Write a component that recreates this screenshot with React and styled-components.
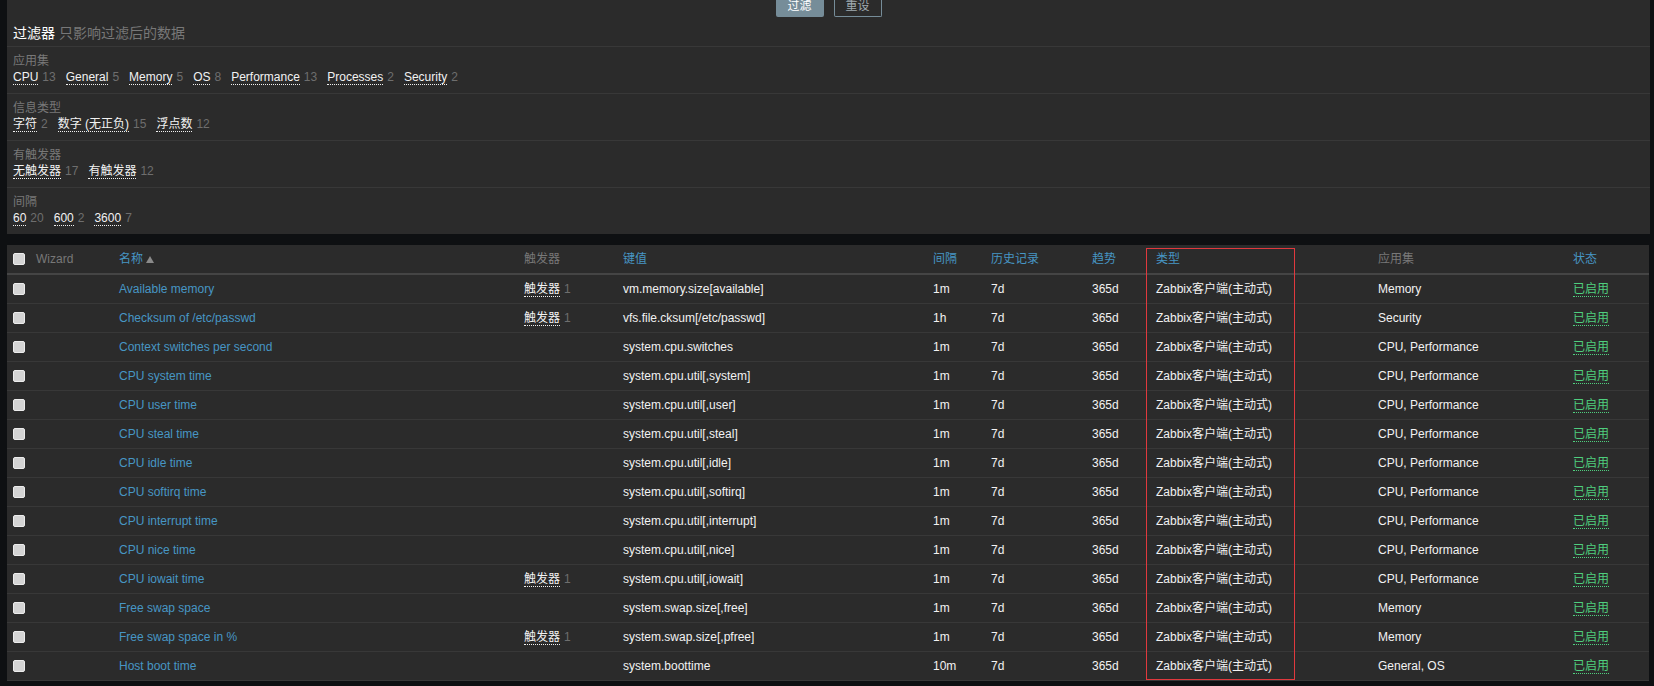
import React from "react";
import styled, { createGlobalStyle } from "styled-components";

const GlobalStyle = createGlobalStyle`
  html, body {
    margin: 0;
    padding: 0;
    background: #0e1012;
  }
  body {
    font-family: "Liberation Sans", Arial, "Noto Sans CJK SC", sans-serif;
    font-size: 12px;
    line-height: 16px;
    color: #f2f2f2;
  }
`;

const filterGroups = [
  {
    label: "应用集",
    items: [
      ["CPU", 13],
      ["General", 5],
      ["Memory", 5],
      ["OS", 8],
      ["Performance", 13],
      ["Processes", 2],
      ["Security", 2],
    ],
  },
  {
    label: "信息类型",
    items: [
      ["字符", 2],
      ["数字 (无正负)", 15],
      ["浮点数", 12],
    ],
  },
  {
    label: "有触发器",
    items: [
      ["无触发器", 17],
      ["有触发器", 12],
    ],
  },
  {
    label: "间隔",
    items: [
      ["60", 20],
      ["600", 2],
      ["3600", 7],
    ],
  },
];

const CPU_PERF = "CPU, Performance";

const items = [
  ["Available memory", true, "vm.memory.size[available]", "1m", "Memory"],
  ["Checksum of /etc/passwd", true, "vfs.file.cksum[/etc/passwd]", "1h", "Security"],
  ["Context switches per second", false, "system.cpu.switches", "1m", CPU_PERF],
  ["CPU system time", false, "system.cpu.util[,system]", "1m", CPU_PERF],
  ["CPU user time", false, "system.cpu.util[,user]", "1m", CPU_PERF],
  ["CPU steal time", false, "system.cpu.util[,steal]", "1m", CPU_PERF],
  ["CPU idle time", false, "system.cpu.util[,idle]", "1m", CPU_PERF],
  ["CPU softirq time", false, "system.cpu.util[,softirq]", "1m", CPU_PERF],
  ["CPU interrupt time", false, "system.cpu.util[,interrupt]", "1m", CPU_PERF],
  ["CPU nice time", false, "system.cpu.util[,nice]", "1m", CPU_PERF],
  ["CPU iowait time", true, "system.cpu.util[,iowait]", "1m", CPU_PERF],
  ["Free swap space", false, "system.swap.size[,free]", "1m", "Memory"],
  ["Free swap space in %", true, "system.swap.size[,pfree]", "1m", "Memory"],
  ["Host boot time", false, "system.boottime", "10m", "General, OS"],
];

const colWidths = [23, 83, 405, 99, 310, 58, 101, 64, 222, 195, 82];

function App() {
  return (
    <Page>
      <GlobalStyle />
      <FilterPanel>
        <ButtonRow>
          <PrimaryButton>过滤</PrimaryButton>
          <OutlineButton>重设</OutlineButton>
        </ButtonRow>
        <FilterTitle>
          <strong>过滤器</strong> <Muted>只影响过滤后的数据</Muted>
        </FilterTitle>
        {filterGroups.map((group) => (
          <FilterSection key={group.label}>
            <SectionLabel>{group.label}</SectionLabel>
            <SectionValues>
              {group.items.map(([name, count]) => (
                <SubFilter key={name}>
                  <DottedLink>{name}</DottedLink>
                  <Count>{count}</Count>
                </SubFilter>
              ))}
            </SectionValues>
          </FilterSection>
        ))}
      </FilterPanel>

      <TablePanel>
        <ItemTable>
          <colgroup>
            {colWidths.map((w, i) => (
              <col key={i} style={{ width: w }} />
            ))}
          </colgroup>
          <thead>
            <tr>
              <Th>
                <CheckBox />
              </Th>
              <Th $muted>Wizard</Th>
              <Th>
                名称<SortArrow />
              </Th>
              <Th $muted>触发器</Th>
              <Th>键值</Th>
              <Th>间隔</Th>
              <Th>历史记录</Th>
              <Th>趋势</Th>
              <Th>类型</Th>
              <Th $muted>应用集</Th>
              <Th>状态</Th>
            </tr>
          </thead>
          <tbody>
            {items.map(([name, hasTrigger, key, interval, apps]) => (
              <tr key={name}>
                <Td>
                  <CheckBox />
                </Td>
                <Td />
                <Td>
                  <NameLink>{name}</NameLink>
                </Td>
                <Td>
                  {hasTrigger && (
                    <>
                      <DottedLink>触发器</DottedLink>
                      <Count>1</Count>
                    </>
                  )}
                </Td>
                <Td>{key}</Td>
                <Td>{interval}</Td>
                <Td>7d</Td>
                <Td>365d</Td>
                <Td>Zabbix客户端(主动式)</Td>
                <Td>{apps}</Td>
                <Td>
                  <StatusLink>已启用</StatusLink>
                </Td>
              </tr>
            ))}
          </tbody>
        </ItemTable>
        <Highlight />
      </TablePanel>
    </Page>
  );
}

const Page = styled.div`
  padding: 0 4px 0 7px;
  height: 686px;
  box-sizing: border-box;
  overflow: hidden;
`;

const FilterPanel = styled.div`
  background: #2b2b2b;
  width: 1643px;
`;

const ButtonRow = styled.div`
  display: flex;
  justify-content: center;
  gap: 10px;
  height: 18px;
`;

const PrimaryButton = styled.div`
  width: 48px;
  height: 17px;
  box-sizing: border-box;
  line-height: 13px;
  text-align: center;
  background: #768d99;
  color: #ffffff;
  border-radius: 0 0 2px 2px;
`;

const OutlineButton = styled(PrimaryButton)`
  background: transparent;
  color: #a0aab0;
  border: 1px solid #768d99;
  border-top: none;
  line-height: 12px;
`;

const FilterTitle = styled.div`
  padding: 7px 6px 0;
  height: 21px;
  font-size: 14px;
  line-height: 16px;
  border-bottom: 1px solid #383838;

  strong {
    font-weight: normal;
    color: #ffffff;
  }
`;

const Muted = styled.span`
  color: #787878;
`;

const FilterSection = styled.div`
  padding: 6px 6px 8px;
  height: 32px;
  border-bottom: 1px solid #383838;

  &:last-child {
    border-bottom: none;
  }
`;

const SectionLabel = styled.div`
  color: #787878;
  line-height: 16px;
`;

const SectionValues = styled.div`
  display: flex;
  line-height: 16px;
`;

const SubFilter = styled.span`
  margin-right: 10px;
`;

const DottedLink = styled.span`
  color: #f2f2f2;
  border-bottom: 1px dotted #f2f2f2;
  line-height: 14px;
`;

const Count = styled.span`
  color: #6e6e6e;
  margin-left: 4px;
`;

const TablePanel = styled.div`
  position: relative;
  margin-top: 11px;
  width: 1642px;
  background: #2b2b2b;
`;

const ItemTable = styled.table`
  width: 1642px;
  table-layout: fixed;
  border-collapse: collapse;
`;

const Th = styled.th`
  height: 28px;
  padding: 0 6px;
  line-height: 16px;
  text-align: left;
  font-weight: normal;
  vertical-align: middle;
  white-space: nowrap;
  color: ${(p) => (p.$muted ? "#787878" : "#4796c4")};
  border-bottom: 2px solid #454545;
`;

const Td = styled.td`
  height: 28px;
  padding: 0 6px;
  line-height: 16px;
  vertical-align: middle;
  white-space: nowrap;
  color: #f2f2f2;
  border-bottom: 1px solid #383838;
`;

const CheckBox = styled.span`
  display: block;
  width: 12px;
  height: 12px;
  box-sizing: border-box;
  background: #d4d4d4;
  border: 1px solid #ececec;
  border-radius: 2px;
`;

const SortArrow = styled.span`
  display: inline-block;
  margin-left: 3px;
  width: 0;
  height: 0;
  border-left: 4px solid transparent;
  border-right: 4px solid transparent;
  border-bottom: 7px solid #8a8a8a;
  vertical-align: 0;
`;

const NameLink = styled.span`
  color: #4796c4;
`;

const StatusLink = styled.span`
  color: #4fcf7e;
  border-bottom: 1px dotted #4fcf7e;
`;

const Highlight = styled.div`
  position: absolute;
  left: 1139px;
  top: 3px;
  width: 149px;
  height: 432px;
  box-sizing: border-box;
  border: 1px solid #e0393e;
  pointer-events: none;
`;

export default App;
